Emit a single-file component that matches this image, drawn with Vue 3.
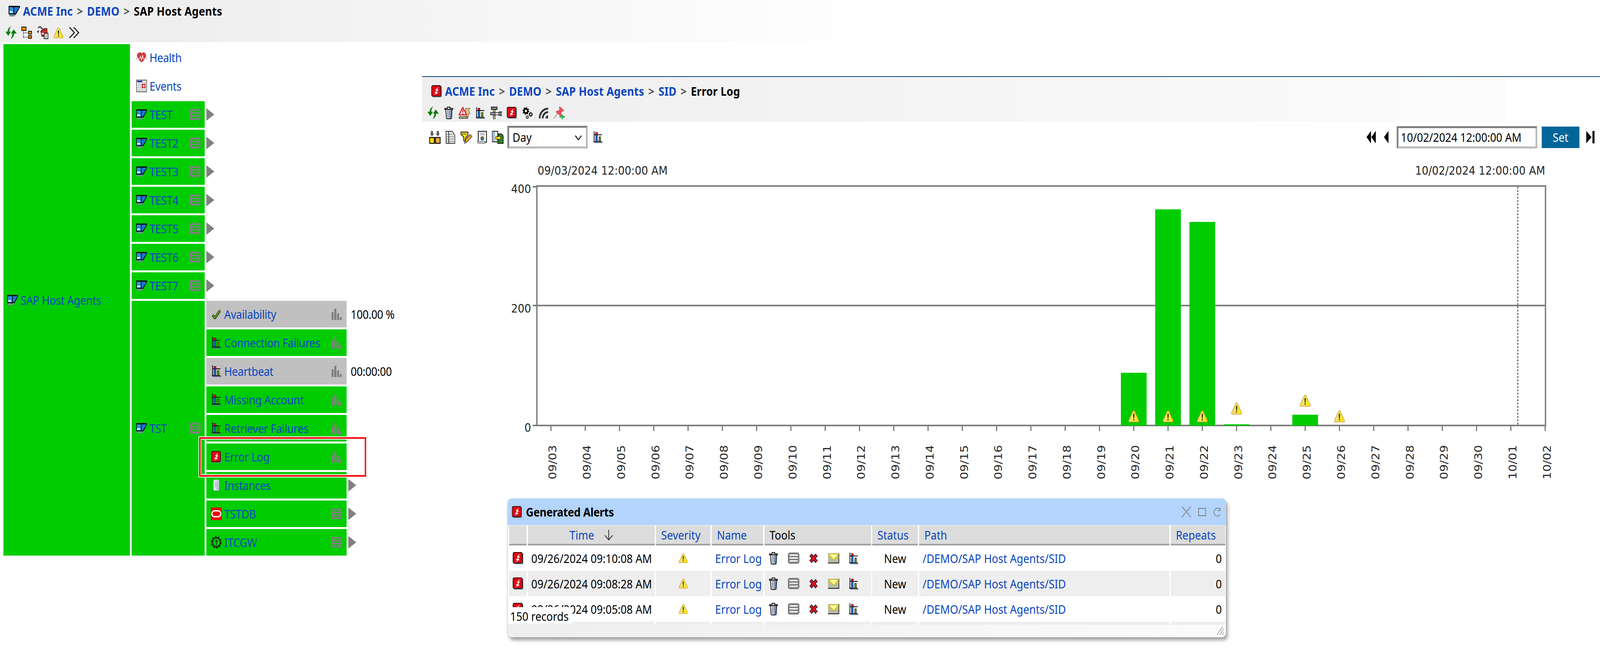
<script setup>
const green = '#00cc00'

// design is 4667 wide; the window can come up narrower, squeeze to fit it
const fitX = Math.min(1, window.innerWidth / 4667)

const topTools = [
  { id: 'refresh', w: 33, h: 33 },
  { id: 'tree', w: 32, h: 32 },
  { id: 'discover', w: 33, h: 33 },
  { id: 'warn', w: 31, h: 30 },
  { id: 'chevrons', w: 32, h: 31 }
]

const panelTools = [
  { id: 'refresh', w: 33, h: 33 },
  { id: 'trash', w: 26, h: 32 },
  { id: 'alertcfg', w: 34, h: 32 },
  { id: 'chart', w: 27, h: 30 },
  { id: 'tools', w: 34, h: 32 },
  { id: 'alert', w: 30, h: 31 },
  { id: 'gears', w: 30, h: 30 },
  { id: 'wifi', w: 28, h: 28 },
  { id: 'pin', w: 34, h: 32 }
]

const chartTools = [
  { id: 'compare', w: 33, h: 33 },
  { id: 'doc', w: 28, h: 33 },
  { id: 'filter', w: 35, h: 33 },
  { id: 'report', w: 30, h: 33 },
  { id: 'export', w: 34, h: 33 }
]

const hosts = ['TEST', 'TEST2', 'TEST3', 'TEST4', 'TEST5', 'TEST6', 'TEST7']

const metrics = [
  { label: 'Availability', icon: 'check', w: 28, h: 26, gray: true, side: 'bars', value: '100.00 %' },
  { label: 'Connection Failures', icon: 'chart', w: 27, h: 30, side: 'bars' },
  { label: 'Heartbeat', icon: 'chart', w: 27, h: 30, gray: true, side: 'bars', value: '00:00:00' },
  { label: 'Missing Account', icon: 'chart', w: 27, h: 30, side: 'bars' },
  { label: 'Retriever Failures', icon: 'chart', w: 27, h: 30, side: 'bars' },
  { label: 'Error Log', icon: 'alert', w: 30, h: 31, side: 'bars' },
  { label: 'Instances', icon: 'server', w: 18, h: 31, arrow: true },
  { label: 'TSTDB', icon: 'oracle', w: 32, h: 32, side: 'menu', arrow: true },
  { label: 'ITCGW', icon: 'cog', w: 32, h: 32, side: 'menu', arrow: true }
]

const days = []
for (let d = 3; d <= 30; d++) days.push('09/' + String(d).padStart(2, '0'))
days.push('10/01', '10/02')

const xOf = i => 1607 + i * 100
const yOf = v => 1089 - v * 1.5325

const bars = [
  { i: 17, v: 88 },
  { i: 18, v: 361 },
  { i: 19, v: 340 },
  { i: 20, v: 2 },
  { i: 22, v: 18 }
]

const flags = [
  { i: 17, y: 1049 },
  { i: 18, y: 1049 },
  { i: 19, y: 1049 },
  { i: 20, y: 1029 },
  { i: 22, y: 1009 },
  { i: 23, y: 1049 }
]

const rowTools = [
  { id: 'trash', w: 26, h: 32 },
  { id: 'menu', w: 34, h: 29 },
  { id: 'redx', w: 26, h: 26 },
  { id: 'mail', w: 33, h: 26 },
  { id: 'chart', w: 27, h: 30 }
]

const alerts = [
  { time: '09/26/2024 09:10:08 AM' },
  { time: '09/26/2024 09:08:28 AM' },
  { time: '09/26/2024 09:05:08 AM' },
  { time: '' }
]
</script>

<template>
  <div class="frame">
    <div class="page" :style="{ transform: `scaleX(${fitX})` }">
      <!-- icon sprite -->
      <svg class="sprite" width="0" height="0">
        <defs>
          <linearGradient id="warnFill" x1="0" x2="1" y1="0" y2="0">
            <stop offset="0" stop-color="#f0dd90" />
            <stop offset="1" stop-color="#ffe900" />
          </linearGradient>
          <linearGradient id="canFill" x1="0" x2="1" y1="0" y2="0">
            <stop offset="0" stop-color="#e8ecf4" />
            <stop offset="1" stop-color="#7f8ba8" />
          </linearGradient>
          <linearGradient id="srvFill" x1="0" x2="1" y1="0" y2="0">
            <stop offset="0" stop-color="#eef3f7" />
            <stop offset="1" stop-color="#b9ccdc" />
          </linearGradient>
        </defs>
        <symbol id="i-refresh" viewBox="0 0 33 33">
          <path fill="#0b7d0b" d="M17 0C10 3 6 8 6 14H0L8 25 16 14H11C11 9 13 4 17 0Z" />
          <path fill="#0b7d0b" d="M15 33C22 30 25 25 25 19H33L24 8 16 19H20C20 24 18 29 15 33Z" />
        </symbol>
        <symbol id="i-tree" viewBox="0 0 32 32">
          <path d="M6 10V31M6 16H21M6 27H21" fill="none" stroke="#444" stroke-width="2" stroke-dasharray="2 1.5" />
          <rect x="1" y="1" width="13" height="9" fill="#f08a00" stroke="#111" stroke-width="2" />
          <rect x="21" y="12" width="9" height="7" fill="#f08a00" stroke="#111" stroke-width="2" />
          <rect x="21" y="23" width="9" height="7" fill="#f08a00" stroke="#111" stroke-width="2" />
        </symbol>
        <symbol id="i-discover" viewBox="0 0 33 33">
          <path d="M3 4L9 1 17 9" fill="none" stroke="#555" stroke-width="4" />
          <circle cx="3" cy="14" r="3" fill="#556" />
          <path d="M11 13L22 6H29V26H14Z" fill="#e0232b" stroke="#111" stroke-width="1.5" />
          <path d="M13 17H24V21H14Z" fill="#fff" />
          <rect x="21" y="18" width="11" height="14" fill="#fff" stroke="#111" stroke-width="2" />
          <rect x="24" y="21" width="5" height="3" fill="#889" />
          <rect x="24" y="26" width="5" height="3" fill="#889" />
        </symbol>
        <symbol id="i-warn" viewBox="0 0 32 32">
          <path d="M16 2C17 2 18 3 19 5L30 26C31 29 30 30 28 30H4C2 30 1 29 2 26L13 5C14 3 15 2 16 2Z" fill="url(#warnFill)" stroke="#c89b30" stroke-width="1.5" />
          <path d="M14.3 10H17.7L17 21H15Z" fill="#111" />
          <rect x="14.6" y="23" width="2.8" height="3" fill="#111" />
        </symbol>
        <symbol id="i-chevrons" viewBox="0 0 32 32">
          <path d="M2 2L17 16 2 30M15 2L30 16 15 30" fill="none" stroke="#2a2a2a" stroke-width="3.2" />
        </symbol>
        <symbol id="i-sap" viewBox="0 0 32 26">
          <path d="M2 20H23L16 26H2Z" fill="#6f8f94" />
          <path d="M0 0H32V4L21 21H0Z" fill="#000" />
          <rect x="2" y="3" width="12" height="16" fill="#2a8fe0" />
          <rect x="3" y="13" width="9" height="4" fill="#e4eef8" />
          <path d="M16 3H30V4L19.5 19H16Z" fill="#1e78cc" />
        </symbol>
        <symbol id="i-alert" viewBox="0 0 32 32">
          <rect x="3" y="3" width="29" height="29" rx="3" fill="#6b8595" />
          <rect x="1" y="1" width="28" height="28" rx="4" fill="#dc0a14" stroke="#2a0505" stroke-width="2" />
          <path d="M22 4L12 13 17 15 9 20 14 22 7 27 21 20 16 18 22 13 18 11Z" fill="#fff" />
        </symbol>
        <symbol id="i-heart" viewBox="0 0 32 26">
          <path d="M16 26C10 21 3 16 3 8 3 3 7 0 11 0 13 0 15 1 16 3 17 1 19 0 21 0 25 0 29 3 29 8 29 16 22 21 16 26Z" fill="#cf3a3e" />
          <path d="M3 16H11L13 10 16 20 19 7 21 16H29" fill="none" stroke="#fff" stroke-width="1.5" />
          <path d="M0 16H3M29 16H32" stroke="#cf3a3e" stroke-width="1.5" />
        </symbol>
        <symbol id="i-calendar" viewBox="0 0 32 32">
          <rect x="1" y="1" width="30" height="30" fill="#eee" stroke="#555" stroke-width="2" />
          <rect x="3" y="3" width="15" height="3" fill="#0000c8" />
          <path d="M2 8H30M2 14H30M2 20H30M2 26H30M8 7V30M14 7V30M20 7V30M26 7V30" stroke="#bbb" stroke-width="1.5" fill="none" />
          <rect x="18" y="12" width="8" height="8" fill="#fff" stroke="#c8141e" stroke-width="2.5" />
        </symbol>
        <symbol id="i-menu" viewBox="0 0 34 29">
          <path fill="#808080" fill-rule="evenodd" d="M6 0H28C31 0 34 3 34 6V23C34 26 31 29 28 29H6C3 29 0 26 0 23V6C0 3 3 0 6 0ZM5 5V8.5H29V5ZM5 12.5V16H29V12.5ZM5 20V23.5H29V20Z" />
        </symbol>
        <symbol id="i-bars" viewBox="0 0 30 29">
          <rect x="0" y="9" width="6" height="20" fill="#808080" />
          <rect x="8" y="0" width="6" height="29" fill="#808080" />
          <rect x="16" y="12" width="6" height="17" fill="#808080" />
          <rect x="24" y="22" width="6" height="7" fill="#808080" />
        </symbol>
        <symbol id="i-check" viewBox="0 0 28 26">
          <path d="M3 16L10 23 25 4" fill="none" stroke="#6a8a90" stroke-width="6" transform="translate(0 1.5)" />
          <path d="M3 15L10 22 25 3" fill="none" stroke="#1a2a10" stroke-width="6" />
          <path d="M3 15L10 22 25 3" fill="none" stroke="#66b010" stroke-width="3" />
        </symbol>
        <symbol id="i-chart" viewBox="0 0 27 30">
          <path d="M3 29H27" stroke="#5d6fa8" stroke-width="2" />
          <path d="M2 0V28M0 26.5H25M2 9H25" stroke="#000" stroke-width="2" fill="none" />
          <rect x="6" y="3" width="6" height="6" fill="#e8001c" stroke="#000" />
          <rect x="6.5" y="9" width="5" height="17" fill="#1470d8" stroke="#000" />
          <rect x="16" y="14" width="5" height="12" fill="#5c9c10" stroke="#000" />
        </symbol>
        <symbol id="i-server" viewBox="0 0 18 31">
          <rect x="1" y="1" width="16" height="28" rx="3" fill="url(#srvFill)" stroke="#a8bccc" />
          <path d="M4 7H14M4 11H14M4 15H14M4 19H14" stroke="#8ea4b8" stroke-width="1.5" />
          <rect x="11" y="23" width="3" height="2" fill="#3a9a30" />
          <path d="M2 30H16" stroke="#2a9a40" stroke-width="2" />
        </symbol>
        <symbol id="i-oracle" viewBox="0 0 32 32">
          <rect width="32" height="32" fill="#f00000" />
          <rect x="3" y="8.5" width="26" height="15" rx="7.5" fill="none" stroke="#fff" stroke-width="3.5" />
        </symbol>
        <symbol id="i-cog" viewBox="0 0 32 32">
          <circle cx="16" cy="16" r="11.5" fill="none" stroke="#1c2a1c" stroke-width="3.5" />
          <circle cx="16" cy="16" r="14" fill="none" stroke="#1c2a1c" stroke-width="4" stroke-dasharray="4.3 4.5" />
          <path d="M16 9V23M12 13H20" stroke="#1c2a1c" stroke-width="2.5" />
        </symbol>
        <symbol id="i-trash" viewBox="0 0 26 32">
          <rect x="6" y="4" width="18" height="28" rx="3" fill="#6f93a8" opacity=".7" />
          <path d="M4 7L6 29C6 30 8 31 9 31H17C18 31 20 30 20 29L22 7Z" fill="url(#canFill)" stroke="#111" stroke-width="2" />
          <path d="M1 7V4.5H9V1H17V4.5H25V7Z" fill="#c8ccd0" stroke="#111" stroke-width="2" />
          <path d="M10 10V27M16 10V27" stroke="#6b7a96" stroke-width="1.5" />
        </symbol>
        <symbol id="i-alertcfg" viewBox="0 0 34 32">
          <path d="M20 4H33L30 10 33 18H28V27H21Z" fill="#d8c878" stroke="#333" />
          <path d="M1 26H26V30H1Z" fill="#d0c088" stroke="#222" stroke-width="1.5" />
          <path d="M12 2L23 21H1Z" fill="#fff" stroke="#d41a20" stroke-width="3" stroke-linejoin="round" />
          <rect x="10.5" y="8" width="3" height="7" fill="#d41a20" />
          <rect x="10.5" y="16.5" width="3" height="3" fill="#d41a20" />
        </symbol>
        <symbol id="i-tools" viewBox="0 0 34 32">
          <rect x="3" y="1" width="17" height="6" fill="#8a9098" stroke="#111" stroke-width="2" />
          <rect x="9" y="7" width="5" height="25" fill="#dcc090" stroke="#111" stroke-width="1.5" />
          <path d="M1 15H14V21H1Z" fill="#98a0a8" stroke="#111" stroke-width="1.5" />
          <path d="M14 15H26M14 21H26" stroke="#111" stroke-width="1.5" />
          <path d="M33 13H28C26 13 25 15 25 18 25 21 26 23 28 23H33V20H29V16H33Z" fill="#98a0a8" stroke="#111" stroke-width="1.5" />
        </symbol>
        <symbol id="i-gears" viewBox="0 0 30 30">
          <circle cx="10" cy="10" r="5.5" fill="none" stroke="#000" stroke-width="4.5" />
          <circle cx="10" cy="10" r="8.5" fill="none" stroke="#000" stroke-width="3" stroke-dasharray="3.2 3.47" />
          <circle cx="24" cy="19" r="3.5" fill="none" stroke="#111" stroke-width="2.5" />
          <circle cx="24" cy="19" r="5" fill="none" stroke="#111" stroke-width="2" stroke-dasharray="2 2" />
          <circle cx="14" cy="26" r="3" fill="none" stroke="#111" stroke-width="1.8" />
        </symbol>
        <symbol id="i-wifi" viewBox="0 0 28 28">
          <path d="M3 28C3 14 14 3 28 3" fill="none" stroke="#333" stroke-width="5" />
          <path d="M12 28C12 19 19 12 28 12" fill="none" stroke="#333" stroke-width="5" />
          <path d="M20 28C20 24 24 20 28 20V28Z" fill="#333" />
        </symbol>
        <symbol id="i-pin" viewBox="0 0 34 32">
          <path d="M1 30L12 18" stroke="#b0b0b0" stroke-width="3" />
          <path d="M17 2L19 0 31 10 29 12 25 11 22 18 24 22 21 24 8 14 10 11 15 11 19 6Z" fill="#e8505a" stroke="#b83038" />
          <path d="M24 20H28V24H34V28H28V32H24V28H18V24H24Z" fill="#30b050" />
        </symbol>
        <symbol id="i-compare" viewBox="0 0 33 33">
          <path d="M5 0H11V7H14L8 14 2 7H5ZM22 0H28V7H31L25 14 19 7H22Z" fill="#5a5a5a" />
          <rect x="1" y="17" width="14" height="15" fill="#ffdc00" stroke="#000" stroke-width="2.5" />
          <rect x="18" y="17" width="14" height="15" fill="#f0a840" stroke="#000" stroke-width="2.5" />
        </symbol>
        <symbol id="i-doc" viewBox="0 0 28 33">
          <path d="M1 1H19L27 11V32H1Z" fill="#e4e4e4" stroke="#333" stroke-width="2" />
          <path d="M2 9H26M2 15H26M2 21H26M2 27H26" stroke="#999" stroke-width="2" />
          <path d="M9 2V31" stroke="#333" stroke-width="2" />
        </symbol>
        <symbol id="i-filter" viewBox="0 0 35 33">
          <path d="M1 3H22V11L14 19V28L9 24V15L1 9Z" fill="#f0e020" stroke="#111" stroke-width="2" />
          <path d="M4 8H18" stroke="#111" stroke-width="2" stroke-dasharray="3 2" />
          <path d="M12 32L15 23 28 9 34 14 20 28Z" fill="#f0a020" stroke="#333" stroke-width="1.5" />
        </symbol>
        <symbol id="i-report" viewBox="0 0 30 33">
          <path d="M4 1H28V29H4Z" fill="#fff" stroke="#222" stroke-width="2.5" />
          <path d="M1 27H24V32H4C2 32 1 30 1 27Z" fill="#c8c8c8" stroke="#333" />
          <path d="M9 6H23M9 10H23" stroke="#777" stroke-width="1.5" />
          <circle cx="16" cy="19" r="5.5" fill="#30a040" />
          <path d="M16 19V13.5A5.5 5.5 0 0 0 11 21Z" fill="#e03030" />
          <path d="M16 19L11 21A5.5 5.5 0 0 0 20 23Z" fill="#2060d0" />
        </symbol>
        <symbol id="i-export" viewBox="0 0 34 33">
          <path d="M1 1H17V28H1Z" fill="#e8f0f8" stroke="#111" stroke-width="2" />
          <path d="M6 2V27" stroke="#7aa0c8" stroke-width="3" />
          <path d="M17 8H28L33 13V32H17Z" fill="#2a8a20" stroke="#111" stroke-width="2" />
          <path d="M11 15H19V11L27 18 19 25V21H11Z" fill="#ffee00" stroke="#222" stroke-width="1.5" />
        </symbol>
        <symbol id="i-redx" viewBox="0 0 26 26">
          <path d="M4 4L22 22M22 4L4 22" stroke="#123" stroke-width="9" />
          <path d="M4 4L22 22M22 4L4 22" stroke="#e01020" stroke-width="5" />
        </symbol>
        <symbol id="i-mail" viewBox="0 0 33 26">
          <rect x="0" y="0" width="33" height="25" fill="#b8b8a8" />
          <path d="M32 0V25H0" fill="none" stroke="#111" stroke-width="2" />
          <path d="M1 2H32L17 17Z" fill="#fff89a" stroke="#b8b800" stroke-width="1.5" />
          <path d="M1 10L14 15M32 10L20 15" stroke="#d8d800" stroke-width="1.5" />
        </symbol>
        <symbol id="i-rew" viewBox="0 0 29 32">
          <path d="M0 16L13 0V32ZM14 16L27 0V32Z" fill="#000" />
        </symbol>
        <symbol id="i-prev" viewBox="0 0 17 32">
          <path d="M2 16L15 0V32Z" fill="#000" />
        </symbol>
        <symbol id="i-last" viewBox="0 0 26 32">
          <path d="M2 0L17 16 2 32ZM20 0H26V32H20Z" fill="#000" />
        </symbol>
      </svg>

      <header class="top-bar">
        <div class="crumbs">
          <svg class="crumb-icon" width="33" height="27"><use href="#i-sap" /></svg>
          <span class="link bold">ACME Inc</span>
          <span class="sep">&gt;</span>
          <span class="link bold">DEMO</span>
          <span class="sep">&gt;</span>
          <span class="bold">SAP Host Agents</span>
        </div>
        <div class="toolbar">
          <span v-for="t in topTools" :key="t.id" class="tool">
            <svg :width="t.w" :height="t.h"><use :href="'#i-' + t.id" /></svg>
          </span>
        </div>
      </header>

      <div class="main">
        <!-- tree map on the left -->
        <section class="tree-side">
          <div class="tree">
            <div class="node root">
              <span class="slot"><svg width="32" height="26"><use href="#i-sap" /></svg></span>
              <span class="link">SAP Host Agents</span>
            </div>
            <div class="children">
              <div class="plain">
                <span class="slot"><svg width="32" height="26"><use href="#i-heart" /></svg></span>
                <span class="link">Health</span>
              </div>
              <div class="plain">
                <span class="slot"><svg width="32" height="32"><use href="#i-calendar" /></svg></span>
                <span class="link">Events</span>
              </div>
              <div v-for="h in hosts" :key="h" class="child">
                <div class="node host">
                  <span class="slot"><svg width="32" height="26"><use href="#i-sap" /></svg></span>
                  <span class="link">{{ h }}</span>
                  <svg class="side" width="33" height="28"><use href="#i-menu" /></svg>
                </div>
                <span class="arrow"></span>
              </div>
              <div class="child">
                <div class="node host host-open">
                  <span class="slot"><svg width="32" height="26"><use href="#i-sap" /></svg></span>
                  <span class="link">TST</span>
                  <svg class="side" width="33" height="28"><use href="#i-menu" /></svg>
                </div>
                <div class="metrics">
                  <div v-for="m in metrics" :key="m.label" class="child">
                    <div class="node metric" :class="{ gray: m.gray }">
                      <span class="slot"><svg :width="m.w" :height="m.h"><use :href="'#i-' + m.icon" /></svg></span>
                      <span class="link">{{ m.label }}</span>
                      <svg v-if="m.side === 'bars'" class="side" width="30" height="29"><use href="#i-bars" /></svg>
                      <svg v-if="m.side === 'menu'" class="side" width="31" height="28"><use href="#i-menu" /></svg>
                    </div>
                    <span v-if="m.arrow" class="arrow"></span>
                    <span v-if="m.value" class="value">{{ m.value }}</span>
                  </div>
                </div>
              </div>
            </div>
            <div class="highlight"></div>
          </div>
        </section>

        <!-- error log panel -->
        <section class="panel">
          <div class="panel-head">
            <div class="crumbs panel-crumbs">
              <svg class="crumb-icon" width="31" height="31"><use href="#i-alert" /></svg>
              <span class="link bold">ACME Inc</span>
              <span class="sep">&gt;</span>
              <span class="link bold">DEMO</span>
              <span class="sep">&gt;</span>
              <span class="link bold">SAP Host Agents</span>
              <span class="sep">&gt;</span>
              <span class="link bold">SID</span>
              <span class="sep">&gt;</span>
              <span class="bold">Error Log</span>
            </div>
            <div class="toolbar">
              <span v-for="t in panelTools" :key="t.id" class="tool">
                <svg :width="t.w" :height="t.h"><use :href="'#i-' + t.id" /></svg>
              </span>
            </div>
          </div>

          <div class="controls">
            <div class="controls-left">
              <span v-for="t in chartTools" :key="t.id" class="tool">
                <svg :width="t.w" :height="t.h"><use :href="'#i-' + t.id" /></svg>
              </span>
              <div class="select-wrap">
                <select class="range">
                  <option>Day</option>
                </select>
                <svg class="caret" width="20" height="13" viewBox="0 0 20 13"><path d="M1 1L10 12 19 1" fill="none" stroke="#000" stroke-width="2.5" /></svg>
              </div>
              <svg class="chart-btn" width="27" height="30"><use href="#i-chart" /></svg>
            </div>
            <div class="controls-right">
              <svg width="29" height="32"><use href="#i-rew" /></svg>
              <svg class="nav-prev" width="17" height="32"><use href="#i-prev" /></svg>
              <input class="date" value="10/02/2024 12:00:00 AM" readonly />
              <button class="set">Set</button>
              <svg class="nav-last" width="26" height="32"><use href="#i-last" /></svg>
            </div>
          </div>

          <svg class="plot" width="3436" height="860" viewBox="1231 400 3436 860">
            <text class="title" x="1568" y="447">09/03/2024 12:00:00 AM</text>
            <text class="title" x="4507" y="447" text-anchor="end">10/02/2024 12:00:00 AM</text>

            <g stroke="#7c7c7c" stroke-width="4" fill="none">
              <path d="M1554 478H1566M1554 782H1566M1554 1089H1566" />
              <path d="M1566 476V1089H4508V476ZM1566 782H4508" />
              <path d="M4427 478V1089" stroke-dasharray="5 3.5" />
            </g>
            <rect v-for="b in bars" :key="b.i" :x="xOf(b.i) - 37.5" :y="yOf(b.v)" width="75" :height="1089.5 - yOf(b.v)" :fill="green" />

            <text class="tick" x="1549" y="494" text-anchor="end">400</text>
            <text class="tick" x="1549" y="800" text-anchor="end">200</text>
            <text class="tick" x="1549" y="1105" text-anchor="end">0</text>

            <g v-for="(d, i) in days" :key="d">
              <path :d="`M${xOf(i)} 1091V1103`" stroke="#6a6a6a" stroke-width="3" />
              <text class="tick" :transform="`translate(${xOf(i) + 16} 1227) rotate(-90)`">{{ d }}</text>
            </g>

            <use v-for="f in flags" :key="'f' + f.i" href="#i-warn" :x="xOf(f.i) - 18" :y="f.y" width="36" height="33" />
          </svg>

          <div class="alerts">
            <div class="alerts-title">
              <svg width="30" height="31"><use href="#i-alert" /></svg>
              <span class="bold title-text">Generated Alerts</span>
              <div class="win-btns">
                <svg width="29" height="28" viewBox="0 0 29 28"><path d="M1 0L28 28M28 0L1 28" stroke="#808080" stroke-width="2" /></svg>
                <svg width="23" height="21" viewBox="0 0 23 21"><rect x="1" y="1" width="21" height="19" fill="none" stroke="#808080" stroke-width="2.5" /></svg>
                <svg width="27" height="23" viewBox="0 0 27 23"><path d="M21 18A10 10 0 1 1 20 5M21 0V8H13" fill="none" stroke="#808080" stroke-width="2" /></svg>
              </div>
            </div>
            <div class="table">
              <div class="grid head">
                <div class="th"></div>
                <div class="th center link">Time
                  <svg class="sort" width="25" height="27" viewBox="0 0 25 27"><path d="M12.5 0V26M1 14L12.5 26 24 14" fill="none" stroke="#222" stroke-width="2" /></svg>
                </div>
                <div class="th link">Severity</div>
                <div class="th link">Name</div>
                <div class="th">Tools</div>
                <div class="th link">Status</div>
                <div class="th link">Path</div>
                <div class="th link">Repeats</div>
              </div>
              <div v-for="(a, idx) in alerts" :key="idx" class="grid row" :class="{ odd: idx % 2 === 1 }">
                <template v-if="a.time">
                  <div class="td"><svg width="32" height="31"><use href="#i-alert" /></svg></div>
                  <div class="td">{{ a.time }}</div>
                  <div class="td mid"><svg width="28" height="27"><use href="#i-warn" /></svg></div>
                  <div class="td link">Error Log</div>
                  <div class="td tools">
                    <span v-for="t in rowTools" :key="t.id" class="row-tool">
                      <svg :width="t.w" :height="t.h"><use :href="'#i-' + t.id" /></svg>
                    </span>
                  </div>
                  <div class="td mid">New</div>
                  <div class="td link">/DEMO/SAP Host Agents/SID</div>
                  <div class="td end">0</div>
                </template>
                <template v-else>
                  <div v-for="n in 8" :key="n" class="td"></div>
                </template>
              </div>
            </div>
            <div class="records">150 records</div>
            <div class="alerts-foot"></div>
            <svg class="grip" width="23" height="21" viewBox="0 0 23 21"><path d="M2 21L18 0M10 21L21 6M18 21L22 15" stroke="#999" stroke-width="2" fill="none" /></svg>
          </div>
        </section>
      </div>
    </div>
  </div>
</template>

<style scoped>
.frame {
  width: 100vw;
  height: 100vh;
  overflow: hidden;
}
.page {
  position: relative;
  width: 4667px;
  height: 1679px;
  transform-origin: 0 0;
  background: #fff;
  color: #000;
  font-family: "Noto Sans", "Open Sans", sans-serif;
  font-size: 31px;
}
.sprite {
  position: absolute;
}
svg {
  display: block;
  flex: none;
}
.link {
  color: #0a45c0;
}
.bold {
  font-weight: 700;
  letter-spacing: 0.2px;
}
.sep {
  color: #555;
  font-weight: 700;
}
.top-bar {
  height: 108px;
  box-sizing: border-box;
  padding-top: 12px;
  background: linear-gradient(90deg, #eee 0, #eee 10%, #fff 55%);
}
.crumbs {
  display: flex;
  align-items: center;
  height: 32px;
  padding-left: 25px;
  gap: 12px;
  line-height: 32px;
  white-space: nowrap;
}
.crumb-icon {
  margin-right: -3px;
}
.toolbar {
  display: flex;
  margin-top: 23px;
  padding-left: 9px;
}
.tool {
  display: flex;
  align-items: center;
  justify-content: center;
  width: 46px;
  height: 33px;
}
.main {
  display: flex;
  align-items: flex-start;
}
.tree-side {
  width: 1231px;
  flex: none;
  padding: 5px 0 0 10px;
  box-sizing: border-box;
  letter-spacing: -0.4px;
}
.tree {
  position: relative;
  display: flex;
  gap: 5px;
}
.node {
  display: flex;
  align-items: center;
  background: #00cc00;
  padding-left: 13px;
  padding-right: 12px;
  box-sizing: border-box;
  white-space: nowrap;
}
.slot {
  display: flex;
  align-items: center;
  justify-content: center;
  width: 32px;
  margin-right: 7px;
}
.root {
  width: 369px;
  padding-left: 11px;
}
.children,
.metrics {
  display: flex;
  flex-direction: column;
  gap: 5px;
}
.plain {
  display: flex;
  align-items: center;
  height: 68px;
  padding-left: 13px;
}
.child {
  display: flex;
  align-items: center;
  gap: 5px;
}
.host {
  width: 213px;
  height: 68px;
}
.host-open {
  align-self: stretch;
  height: auto;
}
.metric {
  width: 409px;
  height: 68px;
  padding-right: 14px;
}
.gray {
  background: #c0c0c0;
}
.side {
  margin-left: auto;
}
.arrow {
  width: 0;
  height: 0;
  border-left: 23px solid #808080;
  border-top: 16px solid transparent;
  border-bottom: 16px solid transparent;
}
.value {
  margin-left: 7px;
  white-space: nowrap;
}
.highlight {
  position: absolute;
  left: 571px;
  top: 1006px;
  width: 487px;
  height: 101px;
  box-sizing: border-box;
  border: 4px solid #f00;
  box-shadow: 0 0 0 2px #fff, inset 0 0 0 2px #fff;
}
.panel {
  flex: 1;
  margin-top: 87px;
  min-width: 0;
}
.panel-head {
  height: 117px;
  box-sizing: border-box;
  border-top: 2px solid #004b87;
  background: linear-gradient(90deg, #eee, #fcfcfc 92%, #fff 92%);
  padding-top: 20px;
}
.panel-crumbs {
  padding-left: 27px;
}
.controls {
  display: flex;
  justify-content: space-between;
  align-items: center;
  height: 58px;
  margin-top: 10px;
  padding: 0 16px 0 14px;
}
.controls-left,
.controls-right {
  display: flex;
  align-items: center;
}
.select-wrap {
  position: relative;
  margin-left: 5px;
}
.range {
  display: block;
  width: 234px;
  height: 58px;
  box-sizing: border-box;
  border-style: solid;
  border-width: 5px;
  border-color: #7f7f7f #b8b8b8 #b8b8b8 #7f7f7f;
  border-radius: 0;
  background: #fff;
  appearance: none;
  padding: 0 0 0 10px;
  font: inherit;
  color: #000;
}
.caret {
  position: absolute;
  right: 17px;
  top: 24px;
  pointer-events: none;
}
.chart-btn {
  margin-left: 17px;
}
.nav-prev {
  margin-left: 20px;
}
.date {
  width: 410px;
  height: 57px;
  margin-left: 22px;
  box-sizing: border-box;
  border-style: solid;
  border-width: 5px;
  border-color: #7f7f7f #b8b8b8 #b8b8b8 #7f7f7f;
  padding: 0 0 0 7px;
  font: inherit;
  color: #000;
  outline: none;
}
.set {
  width: 110px;
  height: 55px;
  margin-left: 13px;
  border: none;
  background: #00669a;
  color: #fff;
  font: inherit;
}
.nav-last {
  margin-left: 18px;
}
.plot {
  margin-top: 20px;
}
.title,
.tick {
  font-family: "DejaVu Sans", sans-serif;
  font-size: 30.5px;
  fill: #262626;
}
.alerts {
  position: relative;
  width: 2095px;
  height: 355px;
  margin: 16px 0 0 250px;
  border-radius: 12px;
  overflow: hidden;
  background: #fff;
  box-shadow: 5px 8px 9px rgba(0, 0, 0, 0.35), 0 0 4px rgba(0, 0, 0, 0.2);
}
.alerts-title {
  display: flex;
  align-items: center;
  height: 68px;
  padding: 0 11px 0 12px;
  gap: 11px;
  box-sizing: border-box;
  background: #b3d4fc;
  white-space: nowrap;
}
.title-text {
  letter-spacing: -0.4px;
}
.win-btns {
  display: flex;
  align-items: center;
  gap: 20px;
  margin-left: auto;
}
.table {
  height: 255px;
  overflow: hidden;
  padding-left: 4px;
}
.grid {
  display: grid;
  grid-template-columns: 51px 370px 159px 150px 311px 133px 730px 159px;
  column-gap: 3.7px;
}
.head {
  height: 52px;
}
.th {
  display: flex;
  align-items: center;
  padding-left: 15px;
  background: #dcdcdc;
  border-top: 2px solid #ececec;
  border-bottom: 4px solid #a0a0a0;
  box-sizing: border-box;
  white-space: nowrap;
}
.center {
  justify-content: center;
  padding-left: 0;
  gap: 30px;
}
.row {
  height: 65px;
}
.td {
  display: flex;
  align-items: center;
  padding-left: 10px;
  white-space: nowrap;
  box-sizing: border-box;
}
.odd .td {
  background: #eee;
}
.mid {
  justify-content: center;
  padding-left: 0;
}
.end {
  justify-content: flex-end;
  padding: 0 10px 0 0;
}
.tools {
  padding-left: 0;
}
.row-tool {
  display: flex;
  justify-content: center;
  align-items: center;
  width: 58.5px;
}
.row-tool:first-child {
  margin-left: -3px;
}
.records {
  position: absolute;
  left: 5px;
  top: 278px;
  width: 184px;
  height: 42px;
  padding-left: 2px;
  line-height: 46px;
  background: #fff;
  box-sizing: border-box;
}
.alerts-foot {
  height: 32px;
  background: linear-gradient(90deg, #eee, #fbfbfb);
}
.grip {
  position: absolute;
  right: 5px;
  bottom: 6px;
}
</style>

<style>
html,
body {
  margin: 0;
  overflow: hidden;
  background: #fff;
}
</style>
